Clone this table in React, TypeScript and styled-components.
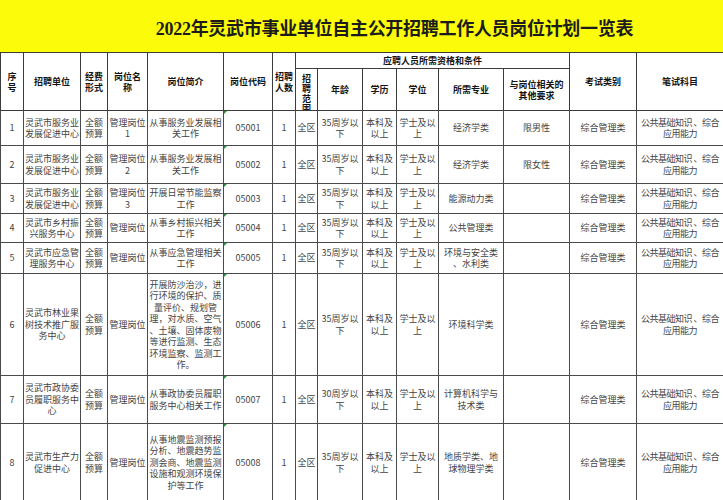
import React from 'react'
import styled, { createGlobalStyle } from 'styled-components'

interface Row {
  no: string
  unit: string
  fund: string
  post: string
  intro: string
  code: string
  num: string
  range: string
  age: string
  edu: string
  degree: string
  major: string
  other: string
  exam: string
  subject: string
  h: number
}

const subject = '公共基础知识 、综合\n应用能力'

const rows: Row[] = [
  { no: '1', unit: '灵武市服务业\n发展促进中心', fund: '全额\n预算', post: '管理岗位\n1', intro: '从事服务业发展相\n关工作', code: '05001', num: '1', range: '全区', age: '35周岁以\n下', edu: '本科及\n以上', degree: '学士及以\n上', major: '经济学类', other: '限男性', exam: '综合管理类', subject, h: 35 },
  { no: '2', unit: '灵武市服务业\n发展促进中心', fund: '全额\n预算', post: '管理岗位\n2', intro: '从事服务业发展相\n关工作', code: '05002', num: '1', range: '全区', age: '35周岁以\n下', edu: '本科及\n以上', degree: '学士及以\n上', major: '经济学类', other: '限女性', exam: '综合管理类', subject, h: 38 },
  { no: '3', unit: '灵武市服务业\n发展促进中心', fund: '全额\n预算', post: '管理岗位\n3', intro: '开展日常节能监察\n工作', code: '05003', num: '1', range: '全区', age: '35周岁以\n下', edu: '本科及\n以上', degree: '学士及以\n上', major: '能源动力类', other: '', exam: '综合管理类', subject, h: 30 },
  { no: '4', unit: '灵武市乡村振\n兴服务中心', fund: '全额\n预算', post: '管理岗位', intro: '从事乡村振兴相关\n工作', code: '05004', num: '1', range: '全区', age: '35周岁以\n下', edu: '本科及\n以上', degree: '学士及以\n上', major: '公共管理类', other: '', exam: '综合管理类', subject, h: 29 },
  { no: '5', unit: '灵武市应急管\n理服务中心', fund: '全额\n预算', post: '管理岗位', intro: '从事应急管理相关\n工作', code: '05005', num: '1', range: '全区', age: '35周岁以\n下', edu: '本科及\n以上', degree: '学士及以\n上', major: '环境与安全类\n、水利类', other: '', exam: '综合管理类', subject, h: 31 },
  { no: '6', unit: '灵武市林业果\n树技术推广服\n务中心', fund: '全额\n预算', post: '管理岗位', intro: '开展防沙治沙，进\n行环境的保护、质\n量评价、规划管\n理，对水质、空气\n、土壤、固体废物\n等进行监测、生态\n环境监察、监测工\n作。', code: '05006', num: '1', range: '全区', age: '35周岁以\n下', edu: '本科及\n以上', degree: '学士及以\n上', major: '环境科学类', other: '', exam: '综合管理类', subject, h: 102 },
  { no: '7', unit: '灵武市政协委\n员履职服务中\n心', fund: '全额\n预算', post: '管理岗位', intro: '从事政协委员履职\n服务中心相关工作', code: '05007', num: '1', range: '全区', age: '30周岁以\n下', edu: '本科及\n以上', degree: '学士及以\n上', major: '计算机科学与\n技术类', other: '', exam: '综合管理类', subject, h: 48 },
  { no: '8', unit: '灵武市生产力\n促进中心', fund: '全额\n预算', post: '管理岗位', intro: '从事地震监测预报\n分析、地震趋势监\n测会商、地震监测\n设施和观测环境保\n护等工作', code: '05008', num: '1', range: '全区', age: '35周岁以\n下', edu: '本科及\n以上', degree: '学士及以\n上', major: '地质学类、地\n球物理学类', other: '', exam: '综合管理类', subject, h: 78 },
]

const widths = [23, 57, 27, 40, 76, 49, 23, 22, 45, 34, 42, 65, 66, 67, 87]

export default function App() {
  return (
    <>
      <GlobalStyle />
      <Page>
        <Title>2022年灵武市事业单位自主公开招聘工作人员岗位计划一览表</Title>
        <Table>
          <colgroup>
            {widths.map((w, i) => (
              <col key={i} style={{ width: w }} />
            ))}
          </colgroup>
          <thead>
            <Tr $h={16}>
              <Th rowSpan={2}>序{'\n'}号</Th>
              <Th rowSpan={2}>招聘单位</Th>
              <Th rowSpan={2}>经费{'\n'}形式</Th>
              <Th rowSpan={2}>岗位名{'\n'}称</Th>
              <Th rowSpan={2}>岗位简介</Th>
              <Th rowSpan={2}>岗位代码</Th>
              <Th rowSpan={2}>招聘{'\n'}人数</Th>
              <Th colSpan={6}>应聘人员所需资格和条件</Th>
              <Th rowSpan={2}>考试类别</Th>
              <Th rowSpan={2}>笔试科目</Th>
            </Tr>
            <Tr $h={42}>
              <Th>
                <Stacked>招{'\n'}聘{'\n'}范{'\n'}围</Stacked>
              </Th>
              <Th>年龄</Th>
              <Th>学历</Th>
              <Th>学位</Th>
              <Th>所需专业</Th>
              <Th>与岗位相关的{'\n'}其他要求</Th>
            </Tr>
          </thead>
          <tbody>
            {rows.map((r) => (
              <Tr key={r.no} $h={r.h}>
                <Td>{r.no}</Td>
                <Td>{r.unit}</Td>
                <Td>{r.fund}</Td>
                <Td>{r.post}</Td>
                <Td>{r.intro}</Td>
                <Td $flag>{r.code}</Td>
                <Td>{r.num}</Td>
                <Td>{r.range}</Td>
                <Td>{r.age}</Td>
                <Td>{r.edu}</Td>
                <Td>{r.degree}</Td>
                <Td>{r.major}</Td>
                <Td>{r.other}</Td>
                <Td>{r.exam}</Td>
                <Td $tight>{r.subject}</Td>
              </Tr>
            ))}
          </tbody>
        </Table>
      </Page>
    </>
  )
}

const GlobalStyle = createGlobalStyle`
  html, body {
    margin: 0;
    padding: 0;
    background: #fff;
  }
  body {
    font-family: "Noto Sans CJK SC", "Noto Sans", sans-serif;
  }
`

const Page = styled.div`
  width: 723px;
  height: 500px;
  overflow: hidden;
  background: #fff;
`

const Title = styled.div`
  height: 52px;
  background: #fbfb0a;
  display: flex;
  align-items: center;
  justify-content: center;
  padding-left: 66px;
  padding-top: 2px;
  box-sizing: border-box;
  font-family: "Liberation Serif", "Noto Sans CJK SC", serif;
  font-size: 18px;
  font-weight: 700;
  color: #1c1c1c;
  letter-spacing: -0.3px;
`

const Table = styled.table`
  width: 723px;
  border-collapse: collapse;
  table-layout: fixed;
`

const Tr = styled.tr<{ $h: number }>`
  height: ${(p) => p.$h}px;
`

const Th = styled.th`
  border: 1px solid #3c3c3c;
  padding: 0;
  font-size: 9px;
  line-height: 11px;
  font-weight: 700;
  color: #141414;
  text-align: center;
  vertical-align: middle;
  white-space: pre;
  overflow: hidden;
`

const Stacked = styled.div`
  height: 40px;
  padding-top: 4px;
  box-sizing: border-box;
  line-height: 10px;
  overflow: hidden;
`

const Td = styled.td<{ $flag?: boolean; $tight?: boolean }>`
  position: relative;
  border: 1px solid #4a4a4a;
  padding: 0;
  font-size: 9px;
  line-height: 11.5px;
  letter-spacing: ${(p) => (p.$tight ? '-0.5px' : '0')};
  color: #444;
  text-align: center;
  vertical-align: middle;
  white-space: pre;
  overflow: hidden;

  &::before {
    content: '';
    display: ${(p) => (p.$flag ? 'block' : 'none')};
    position: absolute;
    top: 0;
    left: 0;
    border-top: 3px solid #2e8b3e;
    border-right: 3px solid transparent;
  }
`
